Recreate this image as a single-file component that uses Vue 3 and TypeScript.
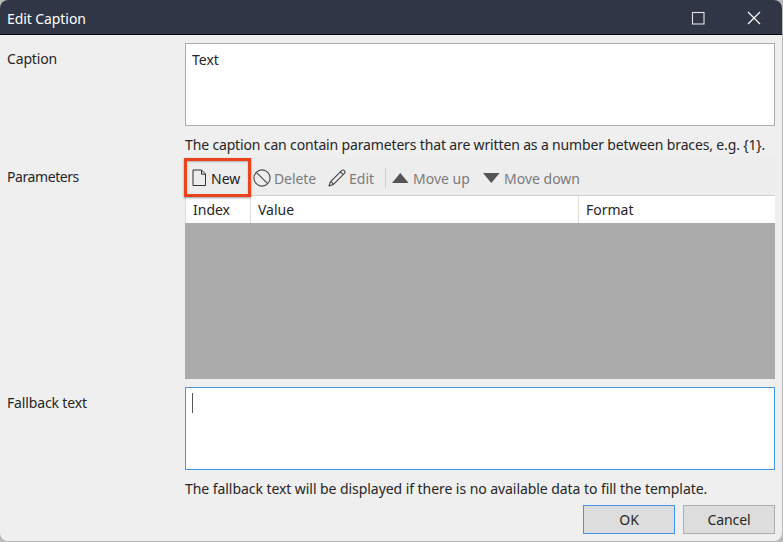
<script setup lang="ts">
import { ref } from 'vue'

interface Column {
  name: string
  cls: string
}

const caption = ref('Text')
const columns: Column[] = [
  { name: 'Index', cls: 'col-index' },
  { name: 'Value', cls: 'col-value' },
  { name: 'Format', cls: 'col-format' },
]
</script>

<template>
  <div class="desktop">
    <div class="window">
      <header class="titlebar">
        <span class="title">Edit Caption</span>
        <svg class="maximize" width="14" height="14" viewBox="0 0 14 14">
          <rect x="1.5" y="1.5" width="11.5" height="11.5" fill="none" stroke="#e4e4e4" stroke-width="1.1" />
        </svg>
        <svg class="close" width="14" height="14" viewBox="0 0 14 14">
          <path d="M1 1L13 13M13 1L1 13" fill="none" stroke="#fff" stroke-width="1.2" />
        </svg>
      </header>
      <main class="form">
        <section class="row caption-row">
          <label class="label">Caption</label>
          <div class="field">
            <div class="textbox">{{ caption }}</div>
            <p class="hint caption-hint">The caption can contain parameters that are written as a number between braces, e.g. {1}.</p>
          </div>
        </section>
        <section class="row param-row">
          <label class="label">Parameters</label>
          <div class="field">
            <div class="toolbar">
              <button class="tool new">
                <svg width="15" height="18" viewBox="0 0 15 18">
                  <path d="M1 1H9.5L13.5 5V16.5H1ZM9.5 1V5.2H13.5" fill="none" stroke="#333" stroke-width="1" />
                </svg>
                <span>New</span>
              </button>
              <button class="tool delete">
                <svg width="18" height="18" viewBox="0 0 18 18">
                  <circle cx="9" cy="9" r="8.1" fill="none" stroke="#484848" stroke-width="1.1" />
                  <path d="M3.3 3.3L14.7 14.7" stroke="#484848" stroke-width="1.1" />
                </svg>
                <span>Delete</span>
              </button>
              <button class="tool edit">
                <svg width="18" height="18" viewBox="0 0 18 18">
                  <path d="M1 17L2.4 12.8L13.6 1.6Q15 .4 16.4 1.6Q17.6 3 16.4 4.4L5.2 15.6ZM2.4 12.8Q4.8 13.2 5.2 15.6M12.4 2.8L15.2 5.6" fill="none" stroke="#444" stroke-width="1.1" stroke-linejoin="round" />
                </svg>
                <span>Edit</span>
              </button>
              <i class="separator"></i>
              <button class="tool up">
                <svg width="17" height="10" viewBox="0 0 17 10"><path d="M8.3 0L16.6 10H0Z" fill="#555" /></svg>
                <span>Move up</span>
              </button>
              <button class="tool down">
                <svg width="17" height="10" viewBox="0 0 17 10"><path d="M0 0H16.6L8.3 10Z" fill="#555" /></svg>
                <span>Move down</span>
              </button>
            </div>
            <div class="grid">
              <div class="grid-head">
                <div v-for="c in columns" :key="c.name" class="cell" :class="c.cls">{{ c.name }}</div>
              </div>
            </div>
          </div>
        </section>
        <section class="row fallback-row">
          <label class="label">Fallback text</label>
          <div class="field">
            <div class="textbox focused"><i class="caret"></i></div>
            <p class="hint fallback-hint">The fallback text will be displayed if there is no available data to fill the template.</p>
          </div>
        </section>
        <footer class="actions">
          <button class="btn primary">OK</button>
          <button class="btn">Cancel</button>
        </footer>
      </main>
    </div>
  </div>
</template>

<style>
body {
  overflow: hidden;
}
</style>

<style scoped>
* {
  box-sizing: border-box;
}
.desktop {
  width: 783px;
  height: 542px;
  background: #b9b9b9;
  font: 14px/20px "Noto Sans", "Open Sans", sans-serif;
  color: #262626;
}
.window {
  width: 782px;
  height: 541px;
  border-radius: 8px;
  overflow: hidden;
  background: #efefef;
}
.titlebar {
  height: 35px;
  display: flex;
  align-items: center;
  padding: 2px 21px 0 7px;
  background: #303646;
  border-bottom: 1px solid #08090d;
  color: #fff;
}
.title {
  flex: 1;
  padding-top: 1px;
  letter-spacing: -0.08px;
}
.maximize {
  margin-right: 42px;
}
.form {
  padding: 8px 7px 0;
}
.row {
  display: flex;
}
.label {
  width: 178px;
  flex: none;
  letter-spacing: -0.15px;
}
.field {
  width: 590px;
}
.caption-row,
.fallback-row {
  height: 115px;
}
.caption-row .label,
.fallback-row .label {
  padding-top: 6px;
}
.textbox {
  height: 83px;
  border: 1px solid #aaaab0;
  background: #fff;
  padding: 6px;
}
.textbox.focused {
  border-color: #4495df;
  padding: 5px 6px;
}
.caret {
  display: block;
  width: 1px;
  height: 20px;
  background: #555;
}
.hint {
  margin: 9px 0 0;
  white-space: nowrap;
}
.caption-hint {
  letter-spacing: -0.148px;
}
.fallback-hint {
  letter-spacing: -0.06px;
}
.param-row {
  height: 229px;
}
.param-row .label {
  padding-top: 9px;
  letter-spacing: -0.42px;
}
.toolbar {
  height: 37px;
  display: flex;
  align-items: stretch;
  background: #ededed;
}
.tool {
  display: flex;
  align-items: center;
  border: 0;
  background: none;
  padding: 3px 0 0;
  font: inherit;
  white-space: nowrap;
  color: #7b7b7b;
}
.tool svg {
  flex: none;
}
.tool span {
  padding-top: 2px;
}
.new {
  width: 67px;
  height: 39px;
  margin: 0 0 0 -1px;
  padding: 0 0 0 5px;
  border: 3px solid #ea4320;
  color: #1c1c1c;
  position: relative;
  z-index: 1;
  box-shadow: 0 1px 2px #0006, inset 0 1px 2px #0004;
}
.new svg {
  margin-right: 4px;
}
.delete {
  width: 75px;
  margin-left: 2px;
  letter-spacing: -0.1px;
}
.delete svg {
  margin-right: 3px;
}
.edit {
  width: 57px;
}
.edit svg {
  margin-right: 3px;
}
.separator {
  width: 1px;
  height: 20px;
  margin-top: 10px;
  background: #cfcfcf;
}
.up {
  width: 91px;
  margin-left: 6px;
}
.up svg,
.down svg {
  margin-right: 4px;
}
.grid {
  height: 184px;
  background: #ababab;
  border-top: 1px solid #cfcfcf;
}
.grid-head {
  display: flex;
  height: 27px;
  background: #fff;
  border-left: 1px solid #ddd;
}
.cell {
  padding: 4px 0 0 7px;
  border-left: 1px solid #dedede;
}
.col-index {
  width: 64px;
  border-left: 0;
}
.col-value {
  width: 328px;
}
.col-format {
  flex: 1;
}
.actions {
  display: flex;
  justify-content: flex-end;
  gap: 8px;
  margin-top: 3px;
}
.btn {
  width: 92px;
  height: 29px;
  border: 1px solid #adadad;
  background: #dddddd;
  font: inherit;
  color: inherit;
  padding: 1px 0 0;
  letter-spacing: -0.1px;
}
.btn.primary {
  border-color: #4495ea;
}
</style>
